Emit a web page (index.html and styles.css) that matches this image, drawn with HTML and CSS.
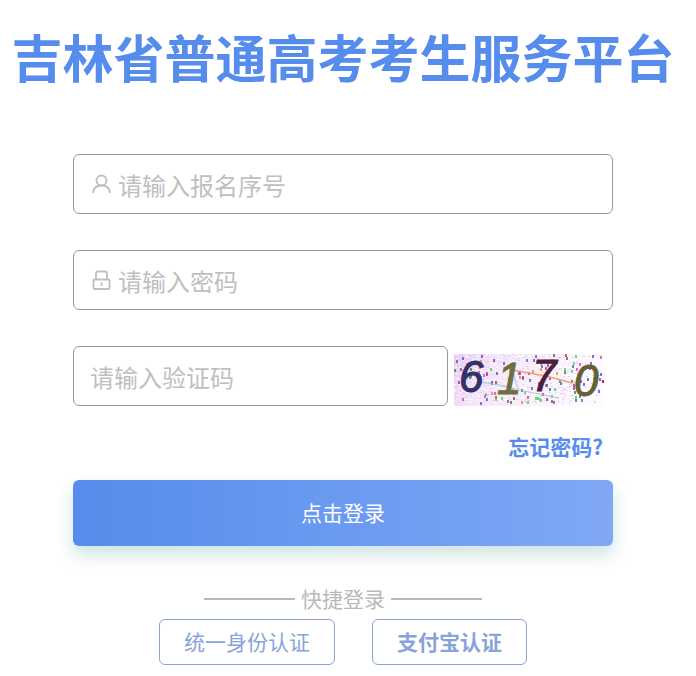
FILE: index.html
```html
<!DOCTYPE html>
<html lang="zh-CN">
<head>
  <meta charset="UTF-8">
  <meta name="viewport" content="width=device-width, initial-scale=1">
  <title>吉林省普通高考考生服务平台</title>
  <link rel="stylesheet" href="styles.css">
</head>
<body>
  <h1 class="title">吉林省普通高考考生服务平台</h1>

  <form class="login-form">
    <div class="input-wrapper">
      <label for="username" aria-label="报名序号">
        <svg class="input-icon" viewBox="-1 0 20 20">
          <circle cx="10.500" cy="6.500" r="5"/>
          <path d="M2 19c.4-4.600 3.600-7.500 8.500-7.500s8.100 2.900 8.500 7.500"/>
        </svg>
      </label>
      <input type="text" id="username" placeholder="请输入报名序号">
    </div>

    <div class="input-wrapper">
      <label for="password" aria-label="密码">
        <svg class="input-icon" viewBox="-1 0 20 20">
          <rect x="2.500" y="9.500" width="16" height="9.500" rx="1"/>
          <path d="M5 9.500V3.500q0-2 2-2h7q2 0 2 2v6M10.500 12.500v3.500"/>
        </svg>
      </label>
      <input type="password" id="password" placeholder="请输入密码">
    </div>

    <div class="captcha-row">
      <div class="input-wrapper">
        <input type="text" id="captcha" aria-label="验证码" placeholder="请输入验证码">
      </div>
      <svg class="captcha" viewBox="0 0 150 52" role="img" aria-label="验证码图片">
        <defs>
          <linearGradient id="captchaBg" x2="1" y2="0.2">
            <stop offset="0" stop-color="#e6cdf3"/>
            <stop offset="0.25" stop-color="#f3e2fa"/>
            <stop offset="0.6" stop-color="#f8eefc"/>
            <stop offset="1" stop-color="#fefaff"/>
          </linearGradient>
        </defs>
        <rect width="150" height="52" fill="url(#captchaBg)"/>
        <g id="noise"></g>
        <path d="M25 28l20 3 25 6 35 7M59 18l5 17" stroke="#a3ccd0"/>
        <path d="M58 16l34 6 26 7" stroke="#f5a163" stroke-width="1.500"/>
        <text x="5" y="38" class="d6">6</text>
        <text x="43" y="40" class="d1">1</text>
        <text x="78" y="37" class="d7">7</text>
        <text x="120" y="42" class="d0">0</text>
        <rect x="148" y="26" width="2" height="3" fill="#e8123c"/>
      </svg>
    </div>

    <a class="forgot" href="#">忘记密码?</a>
    <button type="submit" class="login-btn">点击登录</button>
  </form>

  <div class="quick-title">快捷登录</div>
  <div class="quick-buttons">
    <button type="button">统一身份认证</button>
    <button type="button" class="alipay">支付宝认证</button>
  </div>

  <script src="captcha.js"></script>
</body>
</html>
```

FILE: styles.css
```css
* {
  box-sizing: border-box;
}

body {
  margin: 0;
  padding: 20px 10px 11px 0;
  background: #fff;
  font-family: "Noto Sans CJK SC", sans-serif;
  font-size: 21px;
}

.title {
  margin: 0 0 62px;
  color: #568cec;
  font-size: 51px;
  line-height: 72px;
  text-align: center;
}

.login-form {
  display: flex;
  flex-direction: column;
  max-width: 540px;
  margin: 0 auto;
}

.input-wrapper {
  display: flex;
  align-items: center;
  height: 60px;
  margin-bottom: 36px;
  padding: 0 16px;
  border: 1px solid #999;
  border-radius: 6px;
}

.input-wrapper label {
  display: flex;
  margin-right: 8px;
}

.input-icon {
  width: 20px;
  height: 20px;
  overflow: visible;
  fill: none;
  stroke: #bfbfbf;
  stroke-width: 1.8;
}

.input-wrapper input {
  flex: 1;
  min-width: 0;
  padding: 0;
  border: none;
  outline: none;
  background: none;
  color: #333;
  font-family: inherit;
  font-size: 24px;
}

.input-wrapper input::placeholder {
  color: #bfbfbf;
}

.captcha-row {
  display: flex;
  align-items: flex-end;
  gap: 6px;
  padding-right: 9px;
}

.captcha-row .input-wrapper {
  flex: 1;
  margin-bottom: 0;
  min-width: 0;
}

.captcha {
  width: 150px;
  height: 52px;
  overflow: visible;
  fill: none;
}

.captcha text {
  font: italic 44px "Liberation Sans", Arial, sans-serif;
  stroke-width: 1;
}

.captcha .d6 {
  fill: #343264;
  stroke: #343264;
}

.captcha .d1 {
  fill: #6b7040;
  stroke: #6b7040;
}

.captcha .d7 {
  fill: #4a203b;
  stroke: #4a203b;
}

.captcha .d0 {
  fill: #626233;
  stroke: #626233;
}

.forgot {
  align-self: flex-end;
  margin: 25px 10px 19px 0;
  color: #568cec;
  font-weight: bold;
  line-height: 30px;
  text-decoration: none;
}

.login-btn {
  height: 66px;
  padding: 0 0 2px;
  border: none;
  border-radius: 6px;
  background: linear-gradient(90deg, #568cec, #80a8f5);
  box-shadow: 0 9px 18px rgba(0, 121, 107, 0.2);
  color: #fff;
  font-family: inherit;
  font-size: 21px;
  cursor: pointer;
}

.quick-title {
  display: flex;
  align-items: center;
  justify-content: center;
  gap: 6px;
  margin: 37px 0 6px;
  color: #b9b9b9;
  line-height: 30px;
}

.quick-title::before,
.quick-title::after {
  content: "";
  width: 91px;
  margin-top: 2px;
  border-top: 2px solid #b9b9b9;
}

.quick-buttons {
  display: flex;
  justify-content: center;
  gap: 37px;
}

.quick-buttons button {
  height: 46px;
  padding: 0 24px 2px;
  border: 1px solid #89a3d9;
  border-radius: 6px;
  background: #fff;
  color: #89a3d9;
  font-family: inherit;
  font-size: 21px;
  cursor: pointer;
}

.quick-buttons .alipay {
  font-weight: bold;
}
```

FILE: captcha.js
```js
// 验证码干扰点
var colors = ['#3f7f55', '#e43bd0', '#5b4bd6', '#e78a3c', '#49d65b', '#a04848', '#4a6fa5', '#8a3fb0'];
var noise = document.getElementById('noise');
var seed = 20231;

function rand(max) {
  seed = (seed * 16807) % 2147483647;
  return Math.floor(seed / 2147483647 * max);
}

function addDot(w, h, color, opacity) {
  var dot = document.createElementNS('http://www.w3.org/2000/svg', 'rect');
  dot.setAttribute('x', rand(148));
  dot.setAttribute('y', rand(49));
  dot.setAttribute('width', w);
  dot.setAttribute('height', h);
  dot.setAttribute('fill', color);
  dot.setAttribute('opacity', opacity);
  noise.appendChild(dot);
}

for (var i = 0; i < 900; i++) {
  addDot(2, 1, i % 3 ? '#fff' : '#e3c8f0', 0.8);
}
for (var j = 0; j < 120; j++) {
  addDot(2, 3, colors[rand(colors.length)], 0.8);
}
```
